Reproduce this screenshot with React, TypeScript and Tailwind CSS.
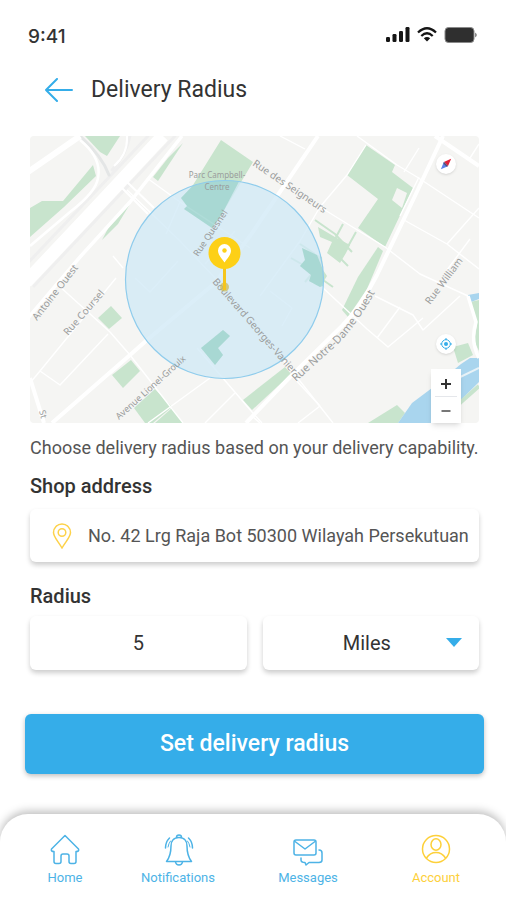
import type { ReactNode } from "react";

const parks = [
  "55,0 90,0 77,20 70,16",
  "0,72 12,65 33,65 63,29 66,40 34,71 0,101",
  "153,7 128,45 123,41 138,22",
  "100,68 88,88 72,104 83,83",
  "191,4 223,26 192,78 182,92 154,73 157,70 151,62 163,49",
  "336,9 365,29 362,36 383,52 355,111 328,92 348,63 317,39",
  "288,91 305,101 320,109 316,117 310,127 297,117 302,106 290,101",
  "272,112 292,121 293,134 297,140 290,151 279,145 281,139 270,130 275,124",
  "348,111 353,115 337,153 318,181 312,174 328,141",
  "81,170 92,182 79,193 68,182",
  "101,224 110,235 93,252 82,239",
  "125,253 142,271 123,287 115,287 104,272",
  "142,272 153,287 125,287",
  "193,194 200,200 188,212 193,219 185,229 171,212",
  "213,264 255,231 261,238 222,274",
  "338,287 367,269 375,277 368,287",
  "440,166 449,164 449,215 444,205 447,190",
  "423,211 438,207 443,219 428,227",
];

const minorRoads = [
  "M97 54L150 105L185 142L255 226L303 287",
  "M28 149L80 196L100 219L153 287",
  "M78 198L30 249L10 235L86 142",
  "M10 235L0 247",
  "M167 212L222 276L232 287",
  "M180 242L118 287M205 257L175 287",
  "M327 0L367 29L387 41L449 82",
  "M117 42L150 66L136 98M150 66L220 112",
  "M290 71L355 111L390 138L438 160",
  "M290 71L270 105L230 160",
  "M250 0L275 13M317 39L290 71M336 9L317 39",
  "M374 84L417 108L449 133M417 108L449 72M417 134L440 103",
  "M345 160L383 179L393 194L430 160",
  "M292 151L337 193L358 211L393 182M370 171L347 202",
  "M290 270L268 287M222 280L230 287M290 270L262 240",
  "M389 41L370 80M389 12L374 36M449 8L440 22",
  "M105 142L120 156L148 125M83 120L93 132",
  "M240 155L262 172L252 190M175 128L205 95",
];

const mapText = [
  { x: 222, y: 29, rotate: 34, size: 10, text: "Rue des Seigneurs" },
  { x: 168, y: 121, rotate: -56, size: 9, text: "Rue Quesnel" },
  { x: 182, y: 146, rotate: 49, size: 10, text: "Boulevard Georges-Vanier" },
  { x: 400, y: 169, rotate: -53, size: 10, text: "Rue William" },
  { x: 7, y: 185, rotate: -52, size: 10, text: "Antoine Ouest" },
  { x: 38, y: 200, rotate: -49, size: 10, text: "Rue Coursel" },
  { x: 89, y: 284, rotate: -42, size: 9, text: "Avenue Lionel-Groulx" },
];

function MapDrawing() {
  return (
    <svg viewBox="0 0 449 287" className="block w-full rounded" role="img" aria-label="Delivery area map">
      <rect width="449" height="287" fill="#f5f5f3" />
      {parks.map((points) => (
        <polygon key={points} points={points} fill="#c8e4cd" />
      ))}
      <polygon points="367,52 377,57 372,72 362,64" fill="#f5f5f3" />
      <g fill="none" stroke="#c8e4cd" strokeWidth="2">
        <path d="M285 84L305 98L322 116M313 88L305 103M326 96L316 114M310 122L318 130" />
        <path d="M270 108L285 118M261 122L275 130M275 146L281 139M293 144L303 151" />
      </g>
      <g fill="#a9d5ee">
        <polygon points="368,287 382,267 402,252 431,228 440,222 449,222 449,246 425,270 408,287" />
        <polygon points="438,159 449,157 449,163 441,166" />
      </g>
      <path d="M449 250L431 266L412 287" stroke="#c8e4cd" strokeWidth="4" fill="none" />
      <path d="M420 246L449 232" stroke="#e7f2f7" strokeWidth="2" />

      <g fill="none" stroke="#efefef" strokeLinecap="round">
        <path d="M-5 130L118 0M4 150L145 0" strokeWidth="3" />
        <path d="M50 0Q72 20 79 39" strokeWidth="3" stroke="#e4e6e6" />
        <path d="M100 0Q96 20 82 34" strokeWidth="3" />
      </g>
      <g fill="none" stroke="#fff" strokeLinejoin="round">
        {minorRoads.map((d) => (
          <path key={d} d={d} strokeWidth="1.4" />
        ))}
        <path d="M-4 146L62 76L133 0" strokeWidth="13" />
        <path d="M-2 36L50 0" strokeWidth="6" />
        <path d="M50 4Q72 22 68 42Q66 56 40 76L0 110" strokeWidth="2.5" />
        <path d="M152 0L100 66L50 121L-2 182" strokeWidth="3.5" />
        <path d="M97 0Q98 18 84 30" strokeWidth="2" />
        <path d="M90 50L118 78M96 45L124 72" strokeWidth="2" />
        <path d="M22 287L100 219L117 204L185 147L220 100L288 0" strokeWidth="4" />
        <path d="M216 287L260 241L312 190Q330 172 347 139L384 62L413 0" strokeWidth="4" />
        <path d="M405 0L449 30" strokeWidth="4" />
        <path d="M0 242L14 287" strokeWidth="4" />
        <path d="M438 160L446 186Q440 205 449 222" strokeWidth="3.5" />
      </g>

      <circle cx="194.5" cy="143.5" r="99" fill="#cfe8f6" fillOpacity="0.75" />
      <g fill="#83c9b9" fillOpacity="0.5">
        <path d="M163 49.600A99 99 0 0 1 209 45.600L192 78L182 92L154 73L157 70L151 62Z" />
        <polygon points="193,194 200,200 188,212 193,219 185,229 171,212" />
        <path d="M272 112L287 119L293 134V150L290 151L279 145L281 139L270 130L275 124Z" />
      </g>
      <circle cx="194.5" cy="143.5" r="99" fill="none" stroke="#8fccec" strokeWidth="1.2" />

      <g fontFamily="'Noto Sans', sans-serif" fill="#9a9c9c">
        {mapText.map((t) => (
          <text key={t.text} transform={`translate(${t.x} ${t.y}) rotate(${t.rotate})`} fontSize={t.size}>
            {t.text}
          </text>
        ))}
        <path id="notre-dame" d="M266 246L308 208Q326 190 346 155" fill="none" />
        <text fontSize="11">
          <textPath href="#notre-dame">Rue Notre-Dame Ouest</textPath>
        </text>
        <g fontSize="8" textAnchor="middle">
          <text x="187" y="42">Parc Campbell-</text>
          <text x="187" y="54">Centre</text>
        </g>
        <text transform="translate(9 275) rotate(75)" fontSize="9">St</text>
      </g>

      <circle cx="194.5" cy="151" r="4.5" fill="#cdb94e" opacity="0.7" />
      <path d="M194.5 130V154" stroke="#f5c51c" strokeWidth="3" />
      <circle cx="194.5" cy="117" r="16" fill="#fdd017" />
      <path
        d="M194.5 126.500C191 121.500 188 118.500 188 114.500A6.500 6.500 0 0 1 201 114.500C201 118.500 198 121.500 194.500 126.500Z"
        fill="#fff"
      />
      <circle cx="194.5" cy="114.500" r="2.2" fill="#fdd017" />
    </svg>
  );
}

function MapPanel() {
  return (
    <section className="relative mr-[27px] ml-[30px] mt-8">
      <MapDrawing />
      <button
        aria-label="Reset north"
        className="absolute right-[23px] top-[18px] flex size-5 items-center justify-center rounded-full bg-white shadow"
      >
        <svg viewBox="0 0 14 14" className="size-3">
          <path d="M13 1L4.500 4.800L9.200 9.500Z" fill="#e0243c" />
          <path d="M1 13L4.500 4.800L9.200 9.500Z" fill="#5b80e8" />
          <path d="M4.500 4.800L7 7L9.200 9.500L7.500 10L4 6.500Z" fill="#53506f" />
        </svg>
      </button>
      <button
        aria-label="Locate me"
        className="absolute bottom-[69px] right-[23px] flex size-5 items-center justify-center rounded-full bg-white shadow"
      >
        <svg viewBox="0 0 12 12" className="size-3" fill="none" stroke="#35ade9">
          <circle cx="6" cy="6" r="4.300" />
          <circle cx="6" cy="6" r="2" fill="#35ade9" stroke="none" />
          <path d="M6 0V2M6 10V12M0 6H2M10 6H12" />
        </svg>
      </button>
      <div className="absolute bottom-0 right-[18px] flex h-[54px] w-[30px] flex-col items-center bg-white text-[#333] shadow-md">
        <button aria-label="Zoom in" className="flex w-full flex-1 items-center justify-center">
          <svg viewBox="0 0 10 10" className="mt-1 size-2.5" stroke="currentColor" strokeWidth="2">
            <path d="M5 0V10M0 5H10" />
          </svg>
        </button>
        <div className="h-px w-[22px] bg-gray-200" />
        <button aria-label="Zoom out" className="flex w-full flex-1 items-center justify-center">
          <svg viewBox="0 0 10 10" className="size-2.5" stroke="#777" strokeWidth="2">
            <path d="M0.500 6H9.500" />
          </svg>
        </button>
      </div>
    </section>
  );
}

function StatusBar() {
  return (
    <div className="flex h-6 items-center justify-between pl-7 pr-[29px]">
      <span className="font-['Inter',sans-serif] text-[19px] leading-6 font-medium">9:41</span>
      <div className="flex h-5 items-start gap-[7px] text-[#151515]">
        <svg viewBox="0 0 24 15" className="h-[15px] w-6" fill="currentColor">
          <rect x="0" y="10" width="4" height="5" rx="1.200" />
          <rect x="6.500" y="7" width="4" height="8" rx="1.200" />
          <rect x="13" y="4" width="4" height="11" rx="1.200" />
          <rect x="19.500" y="0" width="4" height="15" rx="1.200" />
        </svg>
        <svg viewBox="0 0 20 15" className="h-[15px] w-5" fill="none" stroke="currentColor" strokeWidth="2.300">
          <path d="M1 5.500Q10 -3 19 5.500" />
          <path d="M4.300 9Q10 3.600 15.700 9" />
          <path d="M10 14.500L6.800 11.300Q10 8.800 13.200 11.300Z" fill="currentColor" stroke="none" />
        </svg>
        <svg viewBox="0 0 33 16" className="h-4 w-[33px]">
          <rect x="1" y="0.500" width="29" height="15" rx="3.500" fill="#2f2f2f" stroke="#8a8a8a" />
          <path d="M31.300 5.500Q34 8 31.300 10.500Z" fill="#555" />
        </svg>
      </div>
    </div>
  );
}

function NavItem({ label, active, children }: { label: string; active?: boolean; children: ReactNode }) {
  return (
    <a
      href="#"
      className={`flex flex-col items-center text-[13px] leading-4 ${active ? "text-[#fdd03a]" : "text-[#4db3e6]"}`}
    >
      <svg
        viewBox="0 0 32 32"
        className="size-8"
        fill="none"
        stroke="currentColor"
        strokeWidth="1.500"
        strokeLinecap="round"
        strokeLinejoin="round"
      >
        {children}
      </svg>
      <span className="mt-1">{label}</span>
    </a>
  );
}

export default function App() {
  return (
    <div className="flex min-h-screen flex-col bg-white pt-[25px] font-['Roboto',sans-serif] text-[#333]">
      <StatusBar />

      <header className="mt-[27px] flex h-7 items-center gap-[18px] pl-[45px]">
        <button aria-label="Back" className="text-[#35ade9]">
          <svg viewBox="0 0 28 24" className="h-6 w-7" fill="none" stroke="currentColor" strokeWidth="2" strokeLinecap="round" strokeLinejoin="round">
            <path d="M27 12H1M12 1L1 12L12 23" />
          </svg>
        </button>
        <h1 className="text-[23px] leading-7">Delivery Radius</h1>
      </header>

      <MapPanel />

      <main className="pl-[30px] pr-[27px]">
        <p className="mt-[13px] text-[18px] leading-6 text-[#555]">
          Choose delivery radius based on your delivery capability.
        </p>

        <label htmlFor="address" className="mt-[14px] block text-xl leading-6 font-medium">
          Shop address
        </label>
        <div className="mt-[11px] flex h-[53px] items-center rounded-md pl-[22px] shadow-[0_3px_5px_rgba(0,0,0,0.2)]">
          <svg viewBox="0 0 20 26" className="h-[26px] w-5 shrink-0" fill="none" stroke="#fdd24a" strokeWidth="1.500">
            <path d="M10 25C6 18 1.500 14 1.500 9.500A8.500 8.500 0 0 1 18.500 9.500C18.500 14 14 18 10 25Z" />
            <circle cx="10" cy="9.500" r="3.800" />
          </svg>
          <input
            id="address"
            type="text"
            defaultValue="No. 42 Lrg Raja Bot 50300 Wilayah Persekutuan"
            className="ml-4 h-full min-w-0 flex-1 text-[18px] text-[#555] outline-none"
          />
        </div>

        <label htmlFor="radius" className="mt-[22px] block text-xl leading-6 font-medium">
          Radius
        </label>
        <div className="mt-2 grid grid-cols-2 gap-4">
          <input
            id="radius"
            type="text"
            defaultValue="5"
            className="h-[54px] w-full rounded-md text-center text-xl shadow-[0_3px_5px_rgba(0,0,0,0.2)] outline-none"
          />
          <div className="relative">
            <select
              aria-label="Unit"
              className="h-[54px] w-full appearance-none rounded-md pr-2 text-xl shadow-[0_3px_5px_rgba(0,0,0,0.2)] outline-none [text-align-last:center]"
            >
              <option>Miles</option>
              <option>Kilometers</option>
            </select>
            <svg viewBox="0 0 18 9" className="pointer-events-none absolute right-4 top-[22px] h-[9px] w-[18px]">
              <path d="M1 0H17L9 9Z" fill="#35ade9" />
            </svg>
          </div>
        </div>
      </main>

      <button className="mt-11 mr-[22px] ml-[25px] h-[60px] rounded-md bg-[#35ade9] text-[23px] font-medium text-white shadow-[0_2px_5px_rgba(0,0,0,0.25)]">
        Set delivery radius
      </button>

      <nav className="mt-10 grid flex-1 grid-cols-[130fr_96fr_164fr_92fr] rounded-t-[28px] pt-5 pr-6 pb-3 shadow-[0_-3px_9px_rgba(0,0,0,0.25)]">
        <NavItem label="Home">
          <path d="M16 1.500L29.500 15Q30.500 17.500 27 17.500V27.500Q27 29.500 25 29.500H22Q20 29.500 20 27.500V22Q20 20 18 20H14Q12 20 12 22V27.500Q12 29.500 10 29.500H7Q5 29.500 5 27.500V17.500Q1.500 17.500 2.500 15Z" />
        </NavItem>
        <NavItem label="Notifications">
          <path d="M17 3.500C11.500 3.500 9 7.500 9 12C9 19 8 23 4.500 27.500H29.500C26 23 25 19 25 12C25 7.500 22.500 3.500 17 3.500Z" />
          <path d="M14.500 3.500Q14.500 1 17 1Q19.500 1 19.500 3.500M13.500 28Q14 31 17 31Q20 31 20.500 28" />
          <path d="M7.500 4Q3.500 8 3.500 14M26.500 4Q30.500 8 30.500 14" />
          <path d="M8.500 7Q6.500 9.500 6 13M25.500 7Q27.500 9.500 28 13" strokeWidth="1" />
        </NavItem>
        <NavItem label="Messages">
          <rect x="2" y="6" width="22" height="15" rx="2" />
          <path d="M3 7.500L13 15L23 7.500M27 16Q30 16 30 19V26Q30 28.500 27 28.500H17L14 31L13 28.500Q9 28.500 9 26V24" />
        </NavItem>
        <NavItem label="Account" active>
          <circle cx="16" cy="15" r="13.500" />
          <ellipse cx="16" cy="10.500" rx="5" ry="5.800" />
          <path d="M6.500 24Q10 18.500 16 18.500Q22 18.500 25.500 24" />
        </NavItem>
      </nav>
    </div>
  );
}
